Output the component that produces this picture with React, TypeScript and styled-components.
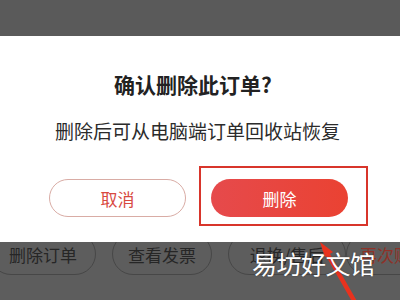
import React from "react";
import styled, { createGlobalStyle } from "styled-components";

const Global = createGlobalStyle`
  html, body { margin: 0; padding: 0; background: #5b5b5b; }
  body { font-family: "Noto Sans CJK SC", "Noto Sans", sans-serif; }
`;

const Page = styled.div`
  position: relative;
  width: 400px;
  height: 300px;
  overflow: hidden;
  display: flex;
  flex-direction: column;
  background: #5c5c5c;
`;

const TopShade = styled.div`
  height: 36px;
  flex: none;
  background: #5a5a5a;
`;

const Dialog = styled.div`
  position: relative;
  z-index: 2;
  height: 206px;
  flex: none;
  background: #ffffff;
  display: flex;
  flex-direction: column;
  align-items: center;
  padding-top: 34px;
  box-sizing: border-box;
`;

const Title = styled.div`
  font-size: 21px;
  line-height: 28px;
  font-weight: 700;
  color: #222222;
  padding-right: 14px;
`;

const Subtitle = styled.div`
  margin-top: 19px;
  font-size: 19px;
  line-height: 28px;
  color: #2b2b2b;
  padding-right: 5px;
`;

const ButtonRow = styled.div`
  margin-top: 34px;
  align-self: flex-start;
  margin-left: 49px;
  display: flex;
  gap: 25px;
`;

const DialogButton = styled.div<{ $primary?: boolean }>`
  position: relative;
  box-sizing: border-box;
  width: 137px;
  height: 38px;
  border-radius: 19px;
  display: flex;
  align-items: center;
  justify-content: center;
  font-size: 17px;
  color: ${(p) => (p.$primary ? "#ffffff" : "#d8493f")};
  border: ${(p) => (p.$primary ? "none" : "1px solid #d9aca5")};
  background: ${(p) =>
    p.$primary ? "linear-gradient(90deg, #e64a4c 0%, #ea4232 100%)" : "#ffffff"};
`;

const Highlight = styled.div`
  position: absolute;
  top: -13px;
  left: -12px;
  right: -20px;
  bottom: -9px;
  border: 2px solid #d8352b;
  pointer-events: none;
`;

const BottomBar = styled.div`
  position: relative;
  flex: 1;
  overflow: hidden;
  background: #5d5d5d;
`;

const PillRow = styled.div`
  display: flex;
  margin-top: -9px;
  margin-left: -10px;
`;

const Pill = styled.div<{ $w: number; $gap: number; $red?: boolean }>`
  flex: none;
  box-sizing: border-box;
  width: ${(p) => p.$w}px;
  height: 42px;
  margin-left: ${(p) => p.$gap}px;
  border: 1px solid #474747;
  border-radius: 21px;
  display: flex;
  align-items: center;
  justify-content: ${(p) => (p.$red ? "flex-start" : "center")};
  padding-left: ${(p) => (p.$red ? 13 : 0)}px;
  padding-top: 1px;
  font-size: 17px;
  white-space: nowrap;
  color: ${(p) => (p.$red ? "#8e3228" : "#262626")};
`;

const Watermark = styled.div`
  position: absolute;
  left: 252px;
  top: 5px;
  z-index: 3;
  font-size: 25px;
  line-height: 32px;
  color: #ffffff;
  text-shadow: 0 0 2px rgba(0, 0, 0, 0.35);
  letter-spacing: -0.5px;
`;

const Arrow = styled.svg`
  position: absolute;
  left: 300px;
  top: 0;
  z-index: 2;
`;

export default function App() {
  return (
    <>
      <Global />
      <Page>
        <TopShade />
        <Dialog>
          <Title>确认删除此订单?</Title>
          <Subtitle>删除后可从电脑端订单回收站恢复</Subtitle>
          <ButtonRow>
            <DialogButton>取消</DialogButton>
            <DialogButton $primary>
              删除
              <Highlight />
            </DialogButton>
          </ButtonRow>
        </Dialog>
        <BottomBar>
          <PillRow>
            <Pill $w={106} $gap={0}>删除订单</Pill>
            <Pill $w={100} $gap={16}>查看发票</Pill>
            <Pill $w={118} $gap={16}>退换/售后</Pill>
            <Pill $w={90} $gap={0} $red>再次购买</Pill>
          </PillRow>
          <Arrow width="100" height="58" viewBox="0 0 100 58">
            <path d="M24 6 L56 62" stroke="#e8321e" strokeWidth="4.5" fill="none" />
            <path d="M20 0 L33 10 L25 15 Z" fill="#e8321e" />
          </Arrow>
          <Watermark>易坊好文馆</Watermark>
        </BottomBar>
      </Page>
    </>
  );
}
